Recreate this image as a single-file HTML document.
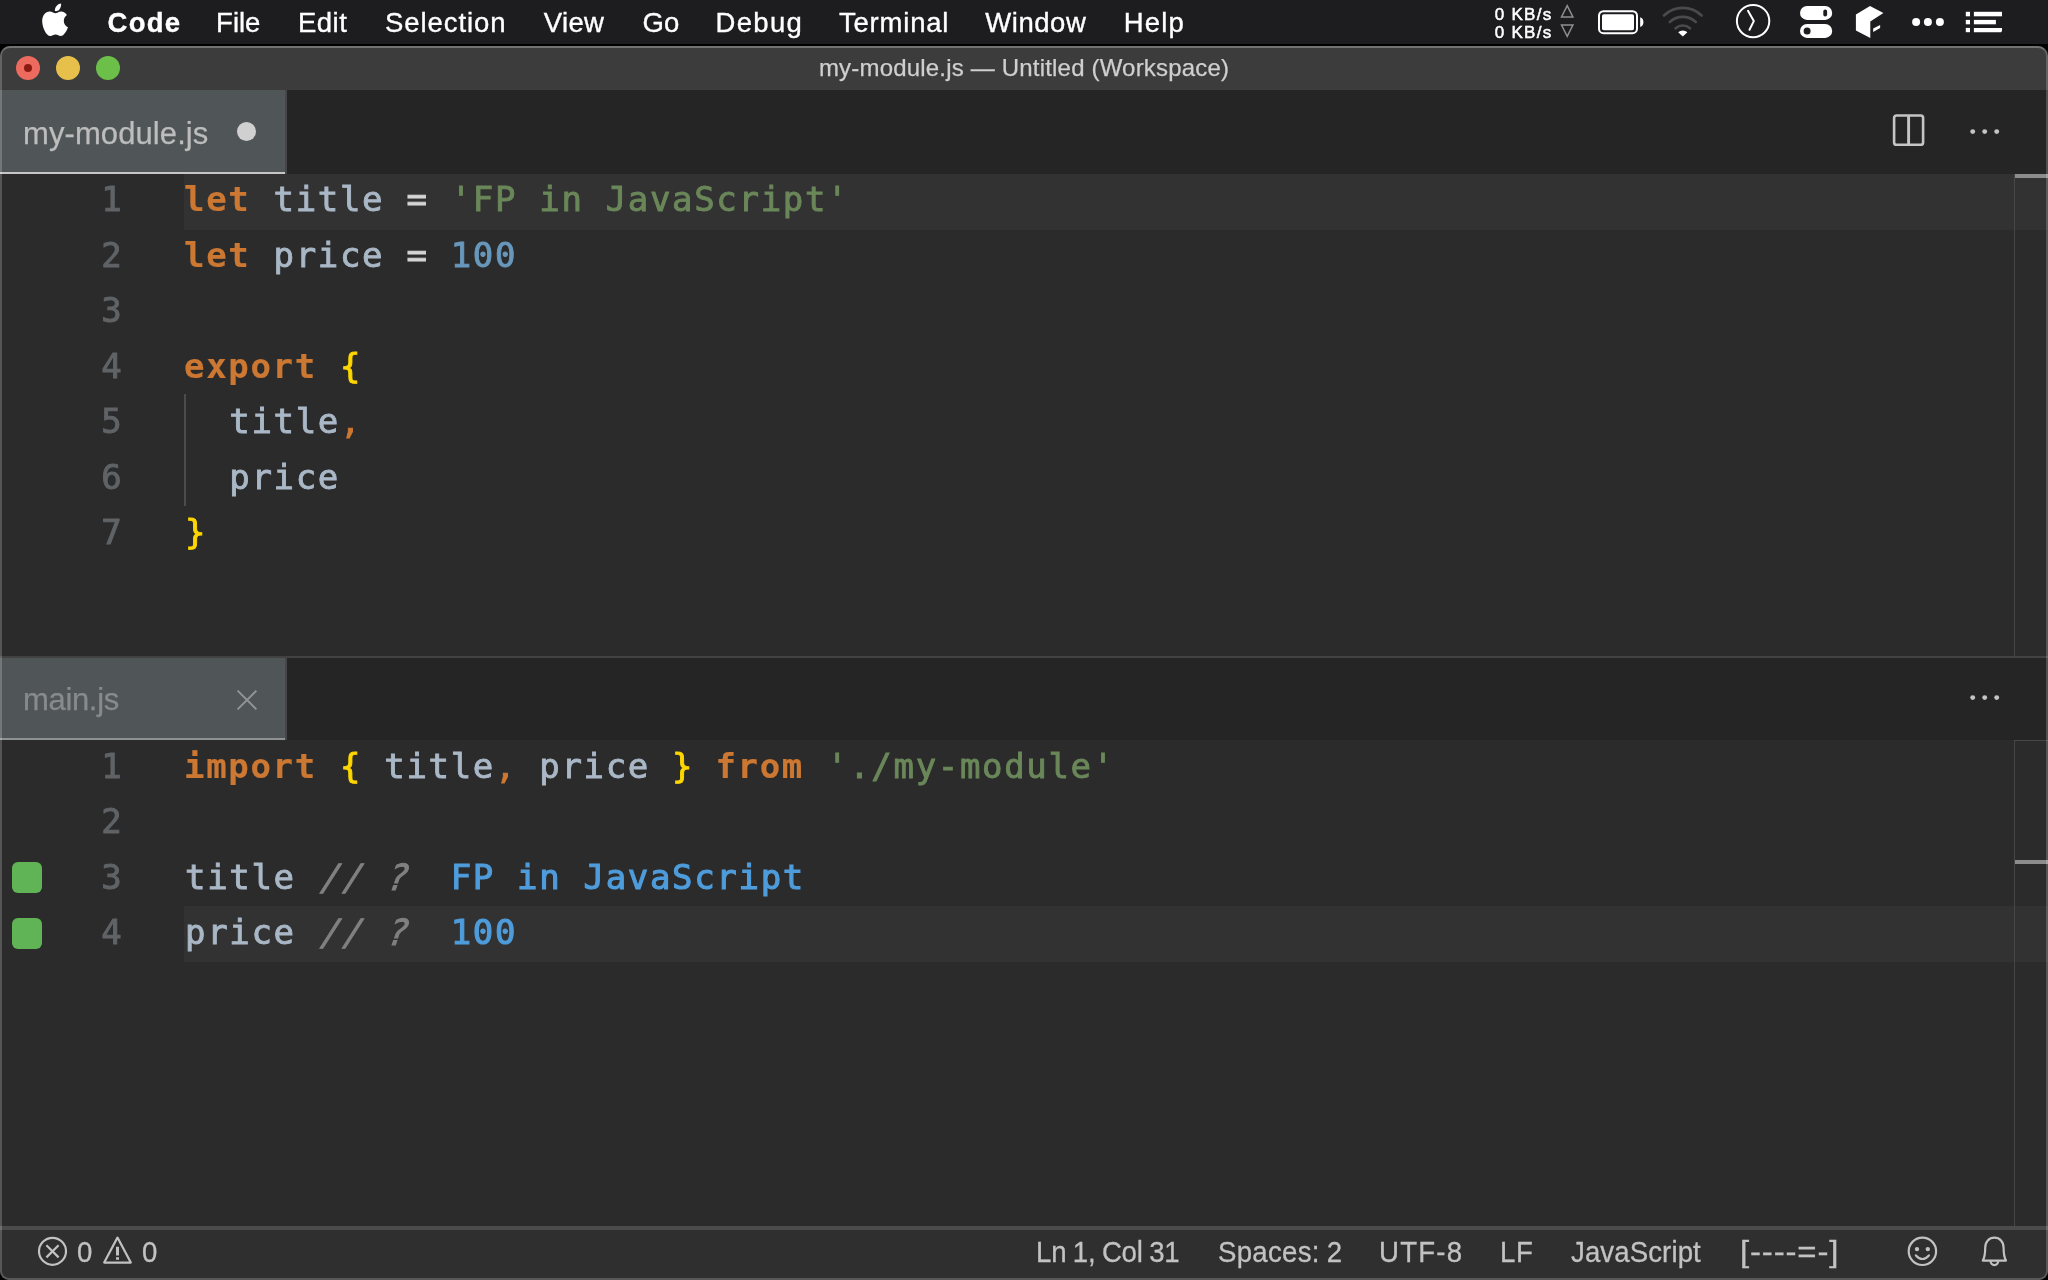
<!DOCTYPE html>
<html lang="en">
<head>
<meta charset="utf-8">
<title>my-module.js — Untitled (Workspace)</title>
<style>
*{box-sizing:border-box;margin:0;padding:0}
html,body{width:2048px;height:1280px;overflow:hidden;background:#000}
body{position:relative;font-family:"Liberation Sans",sans-serif;-webkit-font-smoothing:antialiased}
.abs{position:absolute}
/* ---------- macOS menu bar ---------- */
#menubar{position:absolute;left:0;top:0;width:2048px;height:44px;background:#1d1d20}
#menubar .mi{position:absolute;top:1px;height:44px;line-height:44px;font-size:27.5px;color:#fff;white-space:nowrap;-webkit-text-stroke:0.35px #fff}
#menubar .mi.b{font-weight:bold}
.nb{font-size:17px;line-height:20px;color:#fff;white-space:nowrap;-webkit-text-stroke:0.5px #fff;letter-spacing:1px}
/* ---------- window ---------- */
#win{position:absolute;left:0;top:46px;width:2048px;height:1234px;background:#2b2b2b;border-radius:10px 10px 9px 9px;overflow:hidden}
#winborder{position:absolute;left:0;top:46px;width:2048px;height:1234px;border-radius:10px 10px 9px 9px;border:2px solid rgba(255,255,255,0.2);border-top-color:rgba(255,255,255,0.28);pointer-events:none;z-index:50}
#titlebar{position:absolute;left:0;top:0;width:2048px;height:44px;background:#3c3c3c}
#title{position:absolute;left:0;top:0;width:2048px;height:44px;line-height:44px;font-size:24px;color:#cfcfcf;white-space:nowrap;-webkit-text-stroke:0.25px #cfcfcf}
#ttl{position:absolute;left:820px;top:0}
.tl{position:absolute;top:10px;width:24px;height:24px;border-radius:50%}
/* ---------- tabs ---------- */
.tabbar{position:absolute;left:0;width:2048px;height:84px;background:#252526}
.tab{position:absolute;left:0;top:0;width:285px;height:84px;background:#505557;border-bottom:2px solid #c6c6c6}
.tabsep{position:absolute;left:285px;top:0;width:2px;background:#464646}
.tab .lbl{position:absolute;left:24px;top:0;height:84px;line-height:88px;font-size:31px;white-space:nowrap;-webkit-text-stroke:0.25px currentColor}
/* ---------- editors ---------- */
.editor{position:absolute;left:0;width:2048px;background:#2b2b2b;font-family:"DejaVu Sans Mono","Liberation Mono",monospace;font-size:34px;letter-spacing:1.67px}
.ln{position:absolute;left:0;width:2048px;height:55.500px;line-height:50.800px;white-space:pre;-webkit-text-stroke:0.9px currentColor}
.ln .no{position:absolute;left:0;width:123.500px;text-align:right;color:#606366}
.ln .cd{position:absolute;left:185px;top:0;color:#a9b7c6}
.hl{position:absolute;left:184px;width:1864px;height:55.500px;background:#323232}
.k{color:#cc7832;font-weight:bold;position:relative;left:-1px;-webkit-text-stroke:0.2px #cc7832}
.p{color:#cc7832}
.s{color:#6a8759}
.n{color:#6897bb}
.y{color:#ffd700}
.o{color:#d4d4d4}
.c{color:#808080;font-style:italic;display:inline-block;position:relative;left:4px;margin-right:0;transform:skewX(-9deg) scaleY(1.06)}
.q{color:#4e9cdb;-webkit-text-stroke:1.1px #4e9cdb}
.ruler{position:absolute;left:2013.500px;top:0;width:1.500px;background:#464646}
/* ---------- status bar ---------- */
#status{position:absolute;left:0;top:1180px;width:2048px;height:54px;background:#2f2f2f;border-top:4px solid #4b4b4b}
#status .si{position:absolute;top:0;height:46px;line-height:43px;font-size:30px;word-spacing:-1px;color:#c2c2c2;white-space:nowrap;-webkit-text-stroke:0.3px #c2c2c2;transform-origin:0 50%;transform:scaleX(0.92)}
</style>
</head>
<body>
<div id="root" style="position:absolute;left:0;top:0;width:2048px;height:1280px;will-change:transform">

<!-- macOS menu bar -->
<div id="menubar">
  <svg class="abs" style="left:0;top:0" width="100" height="44" viewBox="0 0 100 44"><path fill="#fff" d="M61.100 3.600 C61.400 6.200 60.400 8.400 59.200 9.700 C58 11 56.300 11.400 54.900 11 C54.700 8.900 55.600 6.900 56.800 5.700 C58 4.400 59.800 3.700 61.100 3.600 Z M55.400 13.300 C54 13.300 52.300 11.400 49.600 11.400 C45.500 11.400 42.200 15.200 42.200 21 C42.200 27.200 46 36.100 50.400 36.100 C52.400 36.100 53.300 34.600 55.600 34.600 C57.900 34.600 58.600 36.100 60.700 36.100 C64 36.100 66.900 30.500 68 27.300 C65.500 26.300 63.800 23.900 63.800 21 C63.800 18.400 65 16.200 66.900 14.900 C65.600 12.800 63.500 11.400 61.200 11.400 C58.700 11.400 56.900 13.300 55.400 13.300 Z"/></svg>
  <span class="mi b" id="m0" style="left:107.6px;letter-spacing:1.22px">Code</span>
  <span class="mi" id="m1" style="left:216.1px;letter-spacing:0.0px">File</span>
  <span class="mi" id="m2" style="left:297.9px;letter-spacing:0.5px">Edit</span>
  <span class="mi" id="m3" style="left:385.0px;letter-spacing:0.94px">Selection</span>
  <span class="mi" id="m4" style="left:543.8px;letter-spacing:0.33px">View</span>
  <span class="mi" id="m5" style="left:642.6px;letter-spacing:0.0px">Go</span>
  <span class="mi" id="m6" style="left:715.6px;letter-spacing:1.28px">Debug</span>
  <span class="mi" id="m7" style="left:839.0px;letter-spacing:0.79px">Terminal</span>
  <span class="mi" id="m8" style="left:985.3px;letter-spacing:0.53px">Window</span>
  <span class="mi" id="m9" style="left:1123.8px;letter-spacing:1.17px">Help</span>

  <!-- right status items -->
  <span class="abs nb" id="nb1" style="left:1494.8px;letter-spacing:1.26px;top:4.500px">0 KB/s</span>
  <span class="abs nb" id="nb2" style="left:1494.8px;letter-spacing:1.26px;top:23px">0 KB/s</span>
  <svg class="abs" style="left:1556px;top:0" width="24" height="44" viewBox="0 0 24 44" fill="none" stroke="#8e8e8e" stroke-width="1.5" stroke-linejoin="miter"><path d="M11.2 5.600 L16.900 16.900 H5.500 Z"/><path d="M11.2 36.300 L16.900 25 H5.500 Z"/></svg>
  <svg class="abs" style="left:1594px;top:6px" width="54" height="32" viewBox="0 0 54 32"><rect x="5" y="5.200" width="38" height="22" rx="4.500" fill="none" stroke="#fff" stroke-width="2"/><rect x="8" y="8.200" width="32" height="16" rx="1.800" fill="#fff"/><path d="M46.200 11.200 C50.500 12.400 50.500 19.800 46.200 21 Z" fill="#fff"/></svg>
  <svg class="abs" style="left:1658px;top:2px" width="50" height="40" viewBox="0 0 50 40" fill="none" stroke-linecap="round"><path d="M6 13.500 a27 27 0 0 1 37.600 0" stroke="#4a4a4c" stroke-width="2.600"/><path d="M11.800 20 a19 19 0 0 1 26 0" stroke="#4a4a4c" stroke-width="2.600"/><path d="M17.600 26.300 a10.800 10.800 0 0 1 14.400 0" stroke="#4a4a4c" stroke-width="2.600"/><path d="M24.800 34.600 l-4.600 -4.300 a6.600 6.600 0 0 1 9.200 0z" fill="#fff" stroke="none"/></svg>
  <svg class="abs" style="left:1732px;top:0" width="44" height="44" viewBox="0 0 44 44" fill="none" stroke="#fff" stroke-width="2"><circle cx="21.100" cy="21.100" r="16.200"/><path d="M16 10.800 L21.800 21.100 L17.500 29.800" stroke-linecap="round" stroke-linejoin="round"/></svg>
  <svg class="abs" style="left:1796px;top:2px" width="40" height="40" viewBox="0 0 40 40"><rect x="4" y="3.900" width="32.200" height="14" rx="7" fill="#fff"/><rect x="4" y="21.900" width="32.200" height="14" rx="7" fill="#fff"/><rect x="27.300" y="7.600" width="3.800" height="6.800" rx="1.900" fill="#1d1d20"/><circle cx="11.100" cy="29.100" r="3.500" fill="#1d1d20"/></svg>
  <svg class="abs" style="left:1850px;top:0" width="40" height="44" viewBox="0 0 40 44" fill="#fff"><path d="M20 5.900 L33.400 13.100 L20.300 21.600 V37.900 L5.900 30.400 V14.400 Z"/><path d="M23.200 28.500 L30.100 24.900 V28.100 L23.200 32.100 Z"/></svg>
  <svg class="abs" style="left:1908px;top:14px" width="40" height="16" viewBox="0 0 40 16" fill="#fff"><circle cx="8.100" cy="8" r="4"/><circle cx="19.900" cy="8" r="4"/><circle cx="31.900" cy="8" r="4"/></svg>
  <svg class="abs" style="left:1962px;top:8px" width="44" height="28" viewBox="0 0 44 28" fill="#fff"><rect x="3.800" y="3.800" width="4.200" height="4.500"/><rect x="11.900" y="3.800" width="28.100" height="4.500"/><rect x="3.800" y="11.900" width="4.200" height="4.400"/><rect x="11.900" y="11.900" width="22" height="4.400"/><rect x="3.800" y="19.900" width="4.200" height="4.300"/><path d="M11.900 19.900 H40 V23 L39 24.200 H11.900 Z"/></svg>
</div>

<!-- VS Code window -->
<div id="win">
  <div id="titlebar">
    <div class="tl" style="left:16px;background:#ec6a5e"></div>
    <div class="abs" style="left:24px;top:18px;width:8px;height:8px;border-radius:50%;background:#8c1a10"></div>
    <div class="tl" style="left:56px;background:#e6c04b"></div>
    <div class="tl" style="left:96px;background:#6cc04a"></div>
    <div id="title"><span id="ttl" style="left:818.9px;letter-spacing:0.19px">my-module.js — Untitled (Workspace)</span></div>
  </div>

  <!-- group 1 -->
  <div class="tabbar" style="top:44px"><div class="tabsep" style="height:84px"></div>
    <div class="tab"><span class="lbl" id="tab1" style="left:23.0px;letter-spacing:0.09px;color:#bdbdbd">my-module.js</span>
      <div class="abs" style="left:237px;top:32px;width:19px;height:19px;border-radius:50%;background:#d0d0d0"></div>
    </div>
    <svg class="abs" style="left:1888px;top:20px" width="40" height="44" viewBox="0 0 40 44" fill="none" stroke="#c5c5c5" stroke-width="2.600"><rect x="6.100" y="5.500" width="29" height="29.300" rx="2.400"/><path d="M20.600 5.500 V34.800" stroke-width="2.900"/></svg>
    <svg class="abs" style="left:1964px;top:34px" width="44" height="16" viewBox="0 0 44 16" fill="#c5c5c5"><circle cx="8.700" cy="7.600" r="2.450"/><circle cx="20.700" cy="7.600" r="2.450"/><circle cx="32.700" cy="7.600" r="2.450"/></svg>
  </div>
  <div class="editor" id="ed1" style="top:128px;height:482px">
    <div class="hl" style="top:0"></div>
    <div class="ln" style="top:0.0px"><span class="no">1</span><span class="cd"><span class="k">let</span> title <span class="o">=</span> <span class="s">'FP in JavaScript'</span></span></div>
    <div class="ln" style="top:55.5px"><span class="no">2</span><span class="cd"><span class="k">let</span> price <span class="o">=</span> <span class="n">100</span></span></div>
    <div class="ln" style="top:111.0px"><span class="no">3</span></div>
    <div class="ln" style="top:166.5px"><span class="no">4</span><span class="cd"><span class="k">export</span> <span class="y">{</span></span></div>
    <div class="ln" style="top:222.0px"><span class="no">5</span><span class="cd">  title<span class="p">,</span></span></div>
    <div class="ln" style="top:277.5px"><span class="no">6</span><span class="cd">  price</span></div>
    <div class="ln" style="top:333.0px"><span class="no">7</span><span class="cd"><span class="y">}</span></span></div>
    <div class="abs" style="left:184.300px;top:220px;width:2px;height:112px;background:#4b4b4b"></div>
    <div class="ruler" style="height:482px"></div>
    <div class="abs" style="left:2015px;top:0;width:33px;height:4px;background:#8c8c8c"></div>
  </div>

  <!-- group 2 -->
  <div class="abs" style="left:0;top:610px;width:2048px;height:2px;background:#424242"></div>
  <div class="tabbar" style="top:612px;height:82px"><div class="tabsep" style="height:82px"></div>
    <div class="tab" style="height:82px;border-bottom-color:#8f9293"><span class="lbl" id="tab2" style="left:23.0px;letter-spacing:-0.33px;color:#878b8d;height:82px;line-height:84px">main.js</span>
      <svg class="abs" style="left:234px;top:29px" width="26" height="26" viewBox="0 0 26 26" fill="none" stroke="#919495" stroke-width="2" stroke-linecap="butt"><path d="M3.600 3.600 L22.400 22.400 M22.400 3.600 L3.600 22.400"/></svg></div>
    <svg class="abs" style="left:1964px;top:32px" width="44" height="16" viewBox="0 0 44 16" fill="#c5c5c5"><circle cx="8.700" cy="7.600" r="2.450"/><circle cx="20.700" cy="7.600" r="2.450"/><circle cx="32.700" cy="7.600" r="2.450"/></svg>
  </div>
  <div class="editor" id="ed2" style="top:694px;height:486px">
    <div class="hl" style="top:166.400px"></div>
    <div class="ln" style="top:0.7px"><span class="no">1</span><span class="cd"><span class="k">import</span> <span class="y">{</span> title<span class="p">,</span> price <span class="y">}</span> <span class="k">from</span> <span class="s">'./my-module'</span></span></div>
    <div class="ln" style="top:56.2px"><span class="no">2</span></div>
    <div class="ln" style="top:111.7px"><span class="no">3</span><span class="cd">title <span class="c">// ?</span>  <span class="q">FP in JavaScript</span></span></div>
    <div class="ln" style="top:167.2px"><span class="no">4</span><span class="cd">price <span class="c">// ?</span>  <span class="q">100</span></span></div>
    <div class="abs" style="left:12px;top:122px;width:30px;height:31px;border-radius:6px;background:#60b455"></div>
    <div class="abs" style="left:12px;top:178px;width:30px;height:31px;border-radius:6px;background:#60b455"></div>
    <div class="ruler" style="height:486px"></div>
    <div class="abs" style="left:2014px;top:0;width:34px;height:1px;background:#464646"></div>
    <div class="abs" style="left:2015px;top:120px;width:33px;height:4px;background:#8c8c8c"></div>
  </div>

  <!-- status bar -->
  <div id="status">
    <svg class="abs" style="left:34px;top:2px" width="40" height="40" viewBox="0 0 40 40" fill="none" stroke="#c2c2c2" stroke-width="2.200"><circle cx="18.500" cy="19.300" r="13.500"/><path d="M12.400 13.200 L24.600 25.400 M24.600 13.200 L12.400 25.400"/></svg>
    <svg class="abs" style="left:98px;top:0" width="40" height="40" viewBox="0 0 40 40" fill="none" stroke="#c2c2c2" stroke-width="2.200" stroke-linejoin="round"><path d="M19.500 7.600 L32.800 32.600 H6.200 Z"/><path d="M19.500 16.800 V25.600" stroke-width="3"/><path d="M19.500 27.200 V29.800" stroke-width="3"/></svg>
    <svg class="abs" style="left:1902px;top:0" width="40" height="44" viewBox="0 0 40 44" fill="none" stroke="#c2c2c2" stroke-width="2.200" stroke-linecap="round"><circle cx="20.400" cy="21.300" r="13.700"/><circle cx="15" cy="19.100" r="2.200" fill="#c2c2c2" stroke="none"/><circle cx="25.800" cy="19.100" r="2.200" fill="#c2c2c2" stroke="none"/><path d="M13.900 25.400 Q20.400 32.600 26.900 25.400"/></svg>
    <svg class="abs" style="left:1974px;top:0" width="40" height="44" viewBox="0 0 40 44" fill="none" stroke="#c2c2c2" stroke-width="2.200" stroke-linejoin="round"><path d="M8.800 30.600 C11.200 26.500 11.200 22 11.200 17.800 C11.200 11.800 15 7.700 20.400 7.700 C25.800 7.700 29.600 11.800 29.600 17.800 C29.600 22 29.600 26.500 32 30.600 Z"/><path d="M16.500 31.200 A3.950 4.600 0 0 0 24.300 31.200"/></svg>
    <span class="si" id="s0" style="left:77.2px;letter-spacing:0.0px">0</span>
    <span class="si" id="s1" style="left:141.5px;letter-spacing:0.0px">0</span>
    <span class="si" id="s2" style="left:1035.5px;letter-spacing:-0.24px">Ln 1, Col 31</span>
    <span class="si" id="s3" style="left:1218.0px;letter-spacing:0.3px">Spaces: 2</span>
    <span class="si" id="s4" style="left:1379.2px;letter-spacing:1.32px">UTF-8</span>
    <span class="si" id="s5" style="left:1499.7px;letter-spacing:0.7px">LF</span>
    <span class="si" id="s6" style="left:1571.0px;letter-spacing:0.11px">JavaScript</span>
    <span class="si" id="s7" style="left:1740.0px;letter-spacing:0.77px;transform:scaleX(1.1)">[----=-]</span>
  </div>
</div>
<div id="winborder"></div>

</div>
</body>
</html>
